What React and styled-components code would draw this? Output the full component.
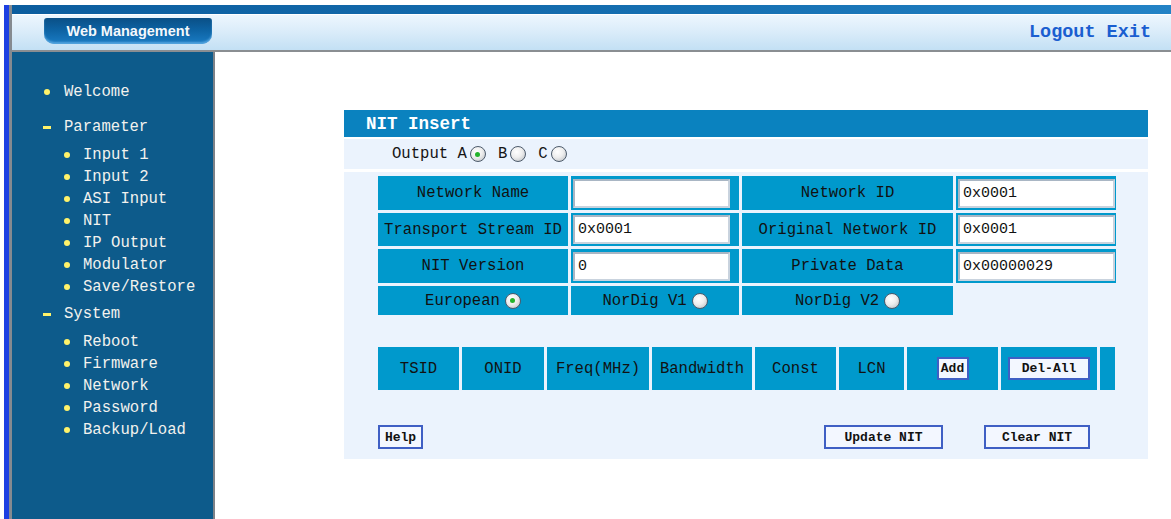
import React from 'react';
import styled, { createGlobalStyle, css } from 'styled-components';

const GlobalStyle = createGlobalStyle`
  html, body {
    margin: 0;
    padding: 0;
    background: #fff;
    font-family: "Liberation Mono", "DejaVu Sans Mono", monospace;
  }
`;

// Outer frame: white strip on top, blue + grey rule down the left edge
const Frame = styled.div`
  margin: 5px 0 0 4px;
  height: calc(100vh - 5px);
  border-left: 5px solid #1c3fe2;
  display: flex;
`;

const Page = styled.div`
  flex: 1;
  border-left: 3px solid #858a90;
  display: flex;
  flex-direction: column;
  min-width: 0;
`;

const Header = styled.div`
  border-top: 9px solid #1068ac;
  border-image: linear-gradient(90deg, #0c5d9e, #1670b2 60%, #2383c6) 1;
  border-image-slice: 1;
  border-bottom: none;
  background: linear-gradient(180deg, #eef7fe 0%, #dcedfa 45%, #c3e0f4 100%);
  height: 36px;
  display: flex;
  align-items: flex-start;
  justify-content: space-between;
  padding: 0 20px 0 32px;
  box-shadow: inset 0 1px 0 #ffffff;
`;

const HeaderRule = styled.div`
  height: 2px;
  background: #8a8e92;
`;

const BrandTab = styled.div`
  margin-top: 4px;
  width: 168px;
  height: 26px;
  border-radius: 3px 3px 10px 10px;
  background: linear-gradient(180deg, #0a4f86 0%, #0d62a2 45%, #1a7cc4 100%);
  box-shadow: inset 0 -2px 2px rgba(120, 190, 240, 0.6);
  color: #f4f8fc;
  font-family: "Liberation Sans", Arial, sans-serif;
  font-weight: bold;
  font-size: 14.5px;
  display: flex;
  align-items: center;
  justify-content: center;
`;

const TopLinks = styled.div`
  display: flex;
  gap: 11px;
  margin-top: 8px;
`;

const TopLink = styled.a`
  font-family: "Liberation Mono", monospace;
  font-weight: bold;
  font-size: 18.5px;
  color: #1a5ed0;
  text-decoration: none;
  cursor: pointer;
`;

const Body = styled.div`
  flex: 1;
  display: flex;
  min-height: 0;
`;

const Sidebar = styled.div`
  width: 201px;
  background: #0d5b8b;
  border-right: 2px solid #7d8288;
  padding-top: 29px;
  box-sizing: content-box;
`;

const MenuItem = styled.div`
  height: 22px;
  display: flex;
  align-items: center;
  padding-left: ${({ $sub }) => ($sub ? 52 : 31)}px;
  margin-top: ${({ $gap }) => $gap || 0}px;
  color: #f2f2ee;
  font-size: 15.6px;
  white-space: pre;
  cursor: pointer;
`;

const Marker = styled.span`
  width: ${({ $sub }) => ($sub ? 19 : 20)}px;
  flex: none;
  display: flex;
  align-items: center;
  padding-left: ${({ $sub }) => ($sub ? 0 : 1)}px;

  &::before {
    content: '';
    display: block;
    background: #fff36a;
    ${({ $dash }) =>
      $dash
        ? css`
            width: 8px;
            height: 3px;
            margin-left: -1px;
          `
        : css`
            width: 6px;
            height: 6px;
            border-radius: 50%;
          `}
  }
`;

const Content = styled.div`
  flex: 1;
  background: #fff;
  padding: 58px 0 0 129px;
`;

const Panel = styled.div`
  width: 804px;
  background: #fff;
  display: flex;
  flex-direction: column;
  gap: 2px;
`;

const PanelTitle = styled.div`
  height: 27px;
  background: #0a82bf;
  color: #fff;
  font-weight: bold;
  font-size: 17.5px;
  display: flex;
  align-items: center;
  padding-left: 22px;
`;

const OutputRow = styled.div`
  height: 30px;
  background: #ebf3fd;
  display: flex;
  align-items: center;
  padding-left: 48px;
  font-size: 15.6px;
  color: #151515;
  white-space: pre;
  margin-bottom: 1px;
`;

const PanelBody = styled.div`
  background: #ebf3fd;
  padding: 4px 0 10px 34px;
`;

const FieldGrid = styled.div`
  display: grid;
  grid-template-columns: 190px 168px 211px 160px;
  grid-template-rows: 34px 33px 34px 29px;
  gap: 3px;
`;

const Cell = styled.div`
  background: #0099cc;
  display: flex;
  align-items: center;
  justify-content: ${({ $left }) => ($left ? 'flex-start' : 'center')};
  padding: ${({ $left }) => ($left ? '0 0 0 2px' : '0')};
  font-size: 15.6px;
  color: #111;
  white-space: pre;
`;

const Empty = styled.div``;

const TextInput = styled.input`
  width: 157px;
  height: 29px;
  box-sizing: border-box;
  border: 2px solid;
  border-color: #a9b6c4 #c9d3de #c9d3de #a9b6c4;
  background: #fff;
  font-family: "Liberation Mono", monospace;
  font-size: 15px;
  color: #111;
  padding: 0 3px;
  outline: none;
`;

const Radio = styled.span`
  display: inline-block;
  position: relative;
  flex: none;
  width: 16px;
  height: 16px;
  box-sizing: border-box;
  border-radius: 50%;
  border: 1px solid #4d5b6b;
  background: radial-gradient(circle at 40% 35%, #ffffff 0%, #eeeeee 45%, #b6babf 100%);
  margin: 0 ${({ $mr }) => $mr || 0}px 0 ${({ $ml }) => $ml || 5}px;

  ${({ $checked }) =>
    $checked &&
    css`
      &::after {
        content: '';
        position: absolute;
        left: 4.5px;
        top: 4.5px;
        width: 5px;
        height: 5px;
        border-radius: 50%;
        background: #24b32c;
      }
    `}
`;

const ListHeader = styled.div`
  margin-top: 32px;
  display: grid;
  grid-template-columns: 81px 82px 102px 100px 81px 65px 91px 96px 15px;
  height: 43px;
  gap: 3px;
`;

const Button = styled.button`
  width: ${({ $w }) => $w}px;
  height: ${({ $h }) => $h || 24}px;
  box-sizing: border-box;
  border: 2px solid #3f5fc4;
  background: #f3f7ff;
  font-family: "Liberation Mono", monospace;
  font-weight: bold;
  font-size: 13px;
  color: #111;
  padding: 0;
  cursor: pointer;
`;

const ButtonRow = styled.div`
  margin-top: 35px;
  display: flex;
  align-items: center;
  padding-right: 58px;
  gap: 41px;
`;

const Spacer = styled.div`
  flex: 1;
`;

const menu = [
  { label: 'Welcome' },
  { label: 'Parameter', dash: true, gap: 13 },
  { label: 'Input 1', sub: true, gap: 6 },
  { label: 'Input 2', sub: true },
  { label: 'ASI Input', sub: true },
  { label: 'NIT', sub: true },
  { label: 'IP Output', sub: true },
  { label: 'Modulator', sub: true },
  { label: 'Save/Restore', sub: true },
  { label: 'System', dash: true, gap: 5 },
  { label: 'Reboot', sub: true, gap: 6 },
  { label: 'Firmware', sub: true },
  { label: 'Network', sub: true },
  { label: 'Password', sub: true },
  { label: 'Backup/Load', sub: true },
];

const columns = ['TSID', 'ONID', 'Freq(MHz)', 'Bandwidth', 'Const', 'LCN'];

const App = () => (
  <>
    <GlobalStyle />
    <Frame>
      <Page>
        <Header>
          <BrandTab>Web Management</BrandTab>
          <TopLinks>
            <TopLink>Logout</TopLink>
            <TopLink>Exit</TopLink>
          </TopLinks>
        </Header>
        <HeaderRule />
        <Body>
          <Sidebar>
            {menu.map(item => (
              <MenuItem key={item.label} $sub={item.sub} $gap={item.gap}>
                <Marker $sub={item.sub} $dash={item.dash} />
                {item.label}
              </MenuItem>
            ))}
          </Sidebar>
          <Content>
            <Panel>
              <PanelTitle>NIT Insert</PanelTitle>
              <OutputRow>
                Output A<Radio $checked $ml={3} $mr={12} />B<Radio $ml={3} $mr={12} />C<Radio $ml={3} />
              </OutputRow>
              <PanelBody>
                <FieldGrid>
                  <Cell>Network Name</Cell>
                  <Cell $left><TextInput readOnly value="" /></Cell>
                  <Cell>Network ID</Cell>
                  <Cell $left><TextInput readOnly value="0x0001" /></Cell>

                  <Cell>Transport Stream ID</Cell>
                  <Cell $left><TextInput readOnly value="0x0001" /></Cell>
                  <Cell>Original Network ID</Cell>
                  <Cell $left><TextInput readOnly value="0x0001" /></Cell>

                  <Cell>NIT Version</Cell>
                  <Cell $left><TextInput readOnly value="0" /></Cell>
                  <Cell>Private Data</Cell>
                  <Cell $left><TextInput readOnly value="0x00000029" /></Cell>

                  <Cell>European<Radio $checked /></Cell>
                  <Cell>NorDig V1<Radio /></Cell>
                  <Cell>NorDig V2<Radio /></Cell>
                  <Empty />
                </FieldGrid>

                <ListHeader>
                  {columns.map(c => (
                    <Cell key={c}>{c}</Cell>
                  ))}
                  <Cell><Button $w={32} $h={23}>Add</Button></Cell>
                  <Cell><Button $w={82} $h={23}>Del-All</Button></Cell>
                  <Cell />
                </ListHeader>

                <ButtonRow>
                  <Button $w={45}>Help</Button>
                  <Spacer />
                  <Button $w={119}>Update NIT</Button>
                  <Button $w={106}>Clear NIT</Button>
                </ButtonRow>
              </PanelBody>
            </Panel>
          </Content>
        </Body>
      </Page>
    </Frame>
  </>
);

export default App;
